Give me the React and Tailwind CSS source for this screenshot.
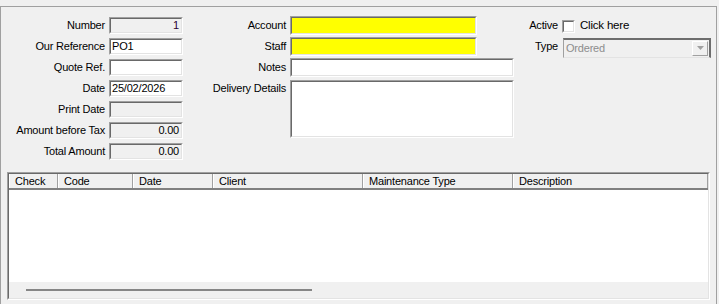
import React from 'react';

const font = { fontFamily: '"Liberation Sans", Arial, sans-serif' };

const sunken =
  'border border-t-[#a0a0a0] border-l-[#a0a0a0] border-b-white border-r-white';
const sunkenInner =
  'border border-t-[#696969] border-l-[#696969] border-b-[#e3e3e3] border-r-[#e3e3e3]';

const Box = ({ className = '', innerClass = '', value, align = 'left', valueClass = 'text-black' }) => (
  <div className={`${sunken} ${className}`}>
    <div className={`${sunkenInner} h-full w-full flex items-center px-[1px] ${innerClass}`}>
      {value != null && (
        <span className={`w-full leading-none ${align === 'right' ? 'text-right pr-[1px]' : ''} ${valueClass}`}>
          {value}
        </span>
      )}
    </div>
  </div>
);

const leftFields = [
  { label: 'Number', value: '1', readOnly: true, align: 'right', valueClass: 'text-[#2a0030]' },
  { label: 'Our Reference', value: 'PO1' },
  { label: 'Quote Ref.', value: '' },
  { label: 'Date', value: '25/02/2026' },
  { label: 'Print Date', value: '', readOnly: true },
  { label: 'Amount before Tax', value: '0.00', readOnly: true, align: 'right' },
  { label: 'Total Amount', value: '0.00', readOnly: true, align: 'right' },
];

const columns = [
  { name: 'Check', w: 'w-[49px]' },
  { name: 'Code', w: 'w-[75px]' },
  { name: 'Date', w: 'w-[80px]' },
  { name: 'Client', w: 'w-[150px]' },
  { name: 'Maintenance Type', w: 'w-[150px]' },
  { name: 'Description', w: 'w-[195px]' },
];

export default function App() {
  return (
    <div
      className="w-[719px] h-[304px] bg-[#f0f0f0] pt-[6px] overflow-hidden text-[11px] text-black tracking-[-0.2px]"
      style={font}
    >
      <div className="w-[717px] h-[300px] border-t border-l border-r border-[#a0a0a0] pt-[8px]">
        <div className="flex">
          {/* left column */}
          <div className="flex flex-col w-[182px]">
            {leftFields.map((f) => (
              <div key={f.label} className="flex items-center h-[21px]">
                <div className="w-[105px] text-right pr-[1px]">{f.label}</div>
                <Box
                  className="ml-[3px] w-[74px] h-[17px]"
                  innerClass={f.readOnly ? 'bg-[#f0f0f0]' : 'bg-white'}
                  value={f.value}
                  align={f.align}
                  valueClass={f.valueClass}
                />
              </div>
            ))}
          </div>

          {/* middle column */}
          <div className="flex flex-col w-[331px]">
            <div className="flex items-center h-[21px]">
              <div className="w-[104px] text-right pr-[1px]">Account</div>
              <Box className="ml-[3px] w-[187px] h-[19px]" innerClass="bg-[#ffff00]" />
            </div>
            <div className="flex items-center h-[21px]">
              <div className="w-[104px] text-right pr-[1px]">Staff</div>
              <Box className="ml-[3px] w-[187px] h-[19px]" innerClass="bg-[#ffff00]" />
            </div>
            <div className="flex items-center h-[21px]">
              <div className="w-[104px] text-right pr-[1px]">Notes</div>
              <Box className="ml-[3px] w-[224px] h-[19px]" innerClass="bg-white" />
            </div>
            <div className="flex items-start">
              <div className="w-[104px] text-right pr-[1px] leading-[21px]">Delivery Details</div>
              <Box className="ml-[3px] mt-[2px] w-[224px] h-[58px]" innerClass="bg-white" />
            </div>
          </div>

          {/* right column */}
          <div className="flex flex-col">
            <div className="flex items-center h-[21px]">
              <div className="w-[44px] text-right">Active</div>
              <div className={`${sunken} ml-[4px] mt-[2px] w-[13px] h-[13px]`}>
                <div className={`${sunkenInner} w-full h-full bg-white`} />
              </div>
              <span className="ml-[5px] text-[11.5px]">Click here</span>
            </div>
            <div className="flex items-center h-[21px]">
              <div className="w-[44px] text-right">Type</div>
              <div className="ml-[5px] mt-[2px] w-[148px] h-[20px] border-t-2 border-r-2 border-l border-b border-t-[#6d6d6d] border-r-[#6d6d6d] border-l-[#a0a0a0] border-b-[#e3e3e3] bg-[#f0f0f0] flex items-center">
                <span className="flex-1 pl-[2px] text-[#8d8d8d]">Ordered</span>
                <div className="w-[16px] h-[15px] mr-[1px] border border-t-white border-l-white border-b-[#a0a0a0] border-r-[#a0a0a0] flex items-center justify-center">
                  <svg width="7" height="4" viewBox="0 0 7 4">
                    <path d="M0 0h7L3.5 4z" fill="#a0a0a0" />
                  </svg>
                </div>
              </div>
            </div>
          </div>
        </div>

        {/* grid */}
        <div className={`${sunken} mt-[10px] ml-[6px] w-[703px] h-[128px]`}>
          <div className={`${sunkenInner} w-full h-full flex flex-col bg-white`}>
            <div className="flex h-[16px] border-b-2 border-[#808080] bg-[#f0f0f0]">
              {columns.map((c) => (
                <div
                  key={c.name}
                  className={`${c.w} h-full flex items-center pl-[5px] border-l border-l-white border-r border-r-[#a0a0a0] whitespace-nowrap overflow-hidden`}
                >
                  {c.name}
                </div>
              ))}
            </div>
            <div className="flex-1 bg-white" />
            <div className="h-[16px] bg-[#f0f0f0] flex items-center">
              <div className="ml-[17px] w-[286px] h-[2px] bg-[#868686]" />
            </div>
          </div>
        </div>
      </div>
    </div>
  );
}
